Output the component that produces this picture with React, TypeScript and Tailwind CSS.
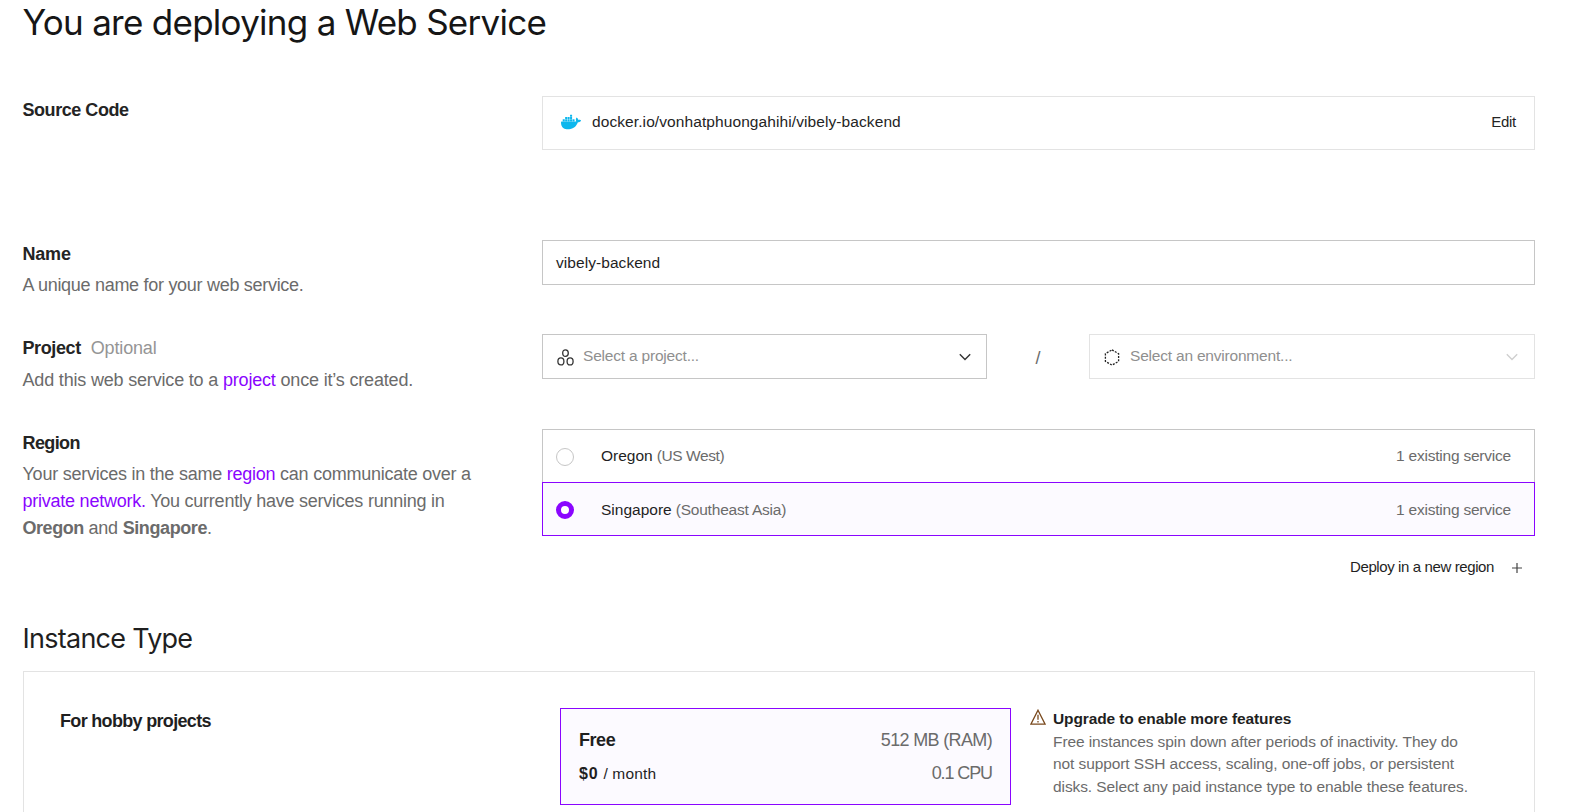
import type { ReactNode } from "react";
import { SiDocker } from "react-icons/si";

function Chevron({ className }: { className: string }) {
  return (
    <svg width="12" height="8" viewBox="0 0 12 8" fill="none" className={className}>
      <path d="M0.8 1.2 6 6.4 11.2 1.2" stroke="currentColor" strokeWidth="1.4" />
    </svg>
  );
}

function ProjectIcon() {
  return (
    <svg width="17" height="17" viewBox="0 0 17 17" fill="none" stroke="#333" strokeWidth="1.3">
      <path d="M8.5 0.8C10.3 0.8 11.3 1.9 11.3 4.1S10.3 7.4 8.5 7.4 5.7 6.3 5.7 4.1 6.7 0.8 8.5 0.8Z" />
      <path d="M3.9 8.9C5.8 8.9 6.9 10 6.9 12.4S5.8 15.9 3.9 15.9 0.9 14.8 0.9 12.4 2 8.9 3.9 8.9Z" />
      <path d="M13.1 8.9C15 8.9 16.1 10 16.1 12.4S15 15.9 13.1 15.9 10.1 14.8 10.1 12.4 11.2 8.9 13.1 8.9Z" />
    </svg>
  );
}

function EnvironmentIcon() {
  return (
    <svg width="16" height="17" viewBox="0 0 16 17" fill="none" stroke="#222" strokeWidth="1.3">
      <path d="M8 0.9 14.6 4.7V12.3L8 16.1 1.4 12.3V4.7Z" strokeDasharray="2 1.3" />
    </svg>
  );
}

function WarningIcon() {
  return (
    <svg width="16" height="16" viewBox="0 0 16 16" fill="none" stroke="#7a4a1e" strokeWidth="1.3" className="mt-px">
      <path d="M8 1.2 15.1 15.2H0.9Z" />
      <path d="M8 5.8V10.8M8 12V13.4" />
    </svg>
  );
}

function Row({ label, className, children }: { label: ReactNode; className: string; children: ReactNode }) {
  return (
    <section className={`flex ${className}`}>
      <div className="-ml-[0.5px] w-[519.5px] shrink-0 pt-px text-[18px] leading-[27px] text-[#6b6b6b]">{label}</div>
      <div className="w-[993px] shrink-0">{children}</div>
    </section>
  );
}

const linkClass = "text-[#8a05ff]";

export default function App() {
  return (
    <main className="h-[812px] overflow-hidden bg-white pl-[23px] font-['Liberation_Sans',sans-serif] text-[#1f1f1f]">
      <h1 className="-ml-[0.5px] h-[96px] whitespace-nowrap font-['Inter',sans-serif] text-[35px] leading-[45px] tracking-[-0.73px] text-[#161616]">
        You are deploying a Web Service
      </h1>

      <Row
        className="h-[144px]"
        label={<h2 className="font-bold tracking-[-0.45px] text-[#242424]">Source Code</h2>}
      >
        <div className="flex h-[54px] items-center border border-[#e3e3e3] px-[18px] pb-[2px] text-[15px] text-[#242424]">
          <SiDocker className="size-5 text-[#0db7ed]" />
          <span className="ml-[11px] text-[15.5px] tracking-[0.09px]">docker.io/vonhatphuongahihi/vibely-backend</span>
          <button className="ml-auto tracking-[-0.25px]">Edit</button>
        </div>
      </Row>

      <Row
        className="h-[94px]"
        label={
          <>
            <h2 className="font-bold tracking-[-0.2px] text-[#242424]">Name</h2>
            <p className="mt-1 tracking-[-0.29px]">A unique name for your web service.</p>
          </>
        }
      >
        <div className="flex h-[45px] items-center border border-[#c6c6c6] px-[13px] pt-px text-[15.5px] tracking-[0.06px]">
          vibely-backend
        </div>
      </Row>

      <Row
        className="h-[95px]"
        label={
          <>
            <h2 className="font-bold tracking-[-0.4px] text-[#242424]">
              Project<span className="ml-[10px] font-normal tracking-[-0.15px] text-[#959595]">Optional</span>
            </h2>
            <p className="mt-[5px] tracking-[-0.18px]">
              Add this web service to a <a className={linkClass}>project</a> once it’s created.
            </p>
          </>
        }
      >
        <div className="flex items-center text-[15.5px] tracking-[-0.2px] text-[#8f8f8f]">
          <div className="flex h-[45px] w-[445px] items-center border border-[#c6c6c6] pt-px pl-[14px] pr-[15px]">
            <ProjectIcon />
            <span className="mb-[2px] ml-[9px]">Select a project...</span>
            <Chevron className="ml-auto text-[#333]" />
          </div>
          <span className="w-[102px] pt-[3px] text-center text-[18px] text-[#6b6b6b]">/</span>
          <div className="flex h-[45px] w-[446px] items-center border border-[#e3e3e3] pt-px pl-[14px] pr-[16px]">
            <EnvironmentIcon />
            <span className="mb-[2px] ml-[10px]">Select an environment...</span>
            <Chevron className="ml-auto text-[#cfcfcf]" />
          </div>
        </div>
      </Row>

      <Row
        className="h-[192px]"
        label={
          <>
            <h2 className="font-bold tracking-[-0.6px] text-[#242424]">Region</h2>
            <p className="mt-1 w-[480px] tracking-[-0.24px]">
              Your services in the same <a className={linkClass}>region</a> can communicate over a<br />
              <a className={linkClass}>private network.</a> You currently have services running in<br />
              <b className="tracking-[-0.45px]">Oregon</b> and <b className="tracking-[-0.4px]">Singapore</b>.
            </p>
          </>
        }
      >
        <div className="text-[15.5px]">
          <div className="flex h-[53px] items-center border border-b-0 border-[#c6c6c6] pl-[13px] pr-[23px]">
            <span className="mt-px size-[18px] rounded-full border border-[#c6c6c6]" />
            <span className="ml-[27px]">Oregon</span>
            <span className="ml-[4px] tracking-[-0.4px] text-[#6b6b6b]">(US West)</span>
            <span className="ml-auto tracking-[-0.22px] text-[#6b6b6b]">1 existing service</span>
          </div>
          <div className="flex h-[54px] items-center border border-[#8a05ff] bg-[#fcfaff] pt-px pl-[13px] pr-[23px]">
            <span className="mt-px size-[18px] rounded-full border-[5px] border-[#8a05ff] bg-white" />
            <span className="ml-[27px]">Singapore</span>
            <span className="ml-[4px] tracking-[-0.2px] text-[#6b6b6b]">(Southeast Asia)</span>
            <span className="ml-auto tracking-[-0.22px] text-[#6b6b6b]">1 existing service</span>
          </div>
          <button className="mt-[20px] ml-auto flex items-center pr-[13px] text-[15px] leading-[22px]">
            <span className="tracking-[-0.39px]">Deploy in a new region</span>
            <svg width="10" height="10" viewBox="0 0 10 10" className="mt-[2px] ml-[18px]" stroke="#444" strokeWidth="1.2">
              <path d="M5 0V10M0 5H10" />
            </svg>
          </button>
        </div>
      </Row>

      <h1 className="-ml-[0.5px] h-[50px] font-['Inter',sans-serif] text-[27px] leading-[36px] tracking-[-0.74px]">
        Instance Type
      </h1>
      <div className="flex h-[300px] w-[1512px] border border-[#e3e3e3] pt-[36px] pl-[36px]">
        <h2 className="w-[500px] shrink-0 text-[18px] leading-[27px] font-bold tracking-[-0.68px]">
          For hobby projects
        </h2>
        <div className="flex h-[97px] w-[451px] shrink-0 flex-col border border-[#8a05ff] bg-[#fcfaff] px-[18px] pt-[18px] text-[18px]">
          <div className="flex justify-between leading-[27px]">
            <b className="tracking-[-0.45px]">Free</b>
            <span className="tracking-[-0.65px] text-[#6b6b6b]">512 MB (RAM)</span>
          </div>
          <div className="mt-[5px] flex items-center leading-[27px]">
            <b className="text-[16px] tracking-[0.8px]">$0</b>
            <span className="mt-px ml-[5px] text-[15.5px] tracking-[0.15px]">/ month</span>
            <span className="ml-auto tracking-[-1.1px] text-[#6b6b6b]">0.1 CPU</span>
          </div>
        </div>
        <div className="ml-[19px] flex text-[15.5px] leading-[22.5px]">
          <WarningIcon />
          <div className="ml-[7px] w-[430px] text-[#6b6b6b]">
            <h3 className="font-bold tracking-[-0.12px] text-[#1f1f1f]">Upgrade to enable more features</h3>
            <p className="whitespace-nowrap tracking-[-0.09px]">
              Free instances spin down after periods of inactivity. They do<br />
              not support SSH access, scaling, one-off jobs, or persistent<br />
              disks. Select any paid instance type to enable these features.
            </p>
          </div>
        </div>
      </div>
    </main>
  );
}
